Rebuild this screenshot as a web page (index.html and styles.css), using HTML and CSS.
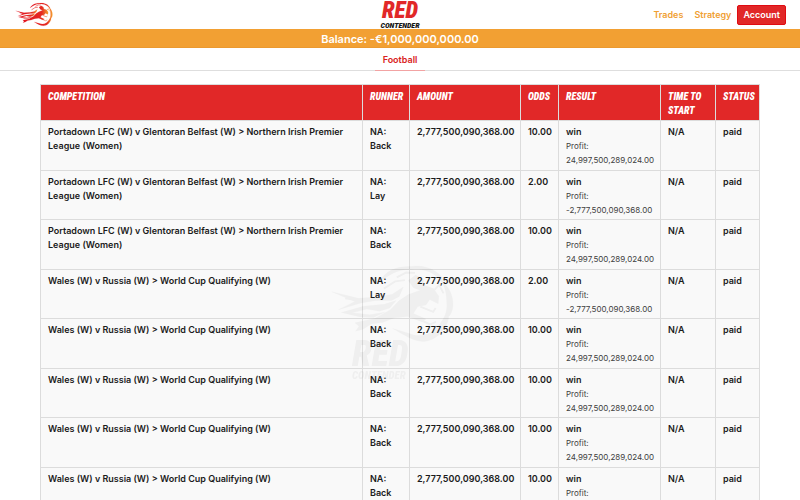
FILE: index.html
```html
<!DOCTYPE html>
<html lang="en">
<head>
<meta charset="utf-8">
<meta name="viewport" content="width=device-width, initial-scale=1">
<title>Red Contender</title>
<link rel="stylesheet" href="styles.css">
</head>
<body>
<svg class="defs" aria-hidden="true">
  <symbol id="horse" viewBox="0 20 420 260">
    <path class="ring" d="M168 82C190 42 225 30 268 31C320 22 370 48 382 90C412 125 408 175 390 190C390 230 345 271 308 269C278 269 248 248 212 228L262 243C315 265 350 235 368 205C391 175 384 145 382 118C376 65 325 34 275 40C225 38 200 58 168 82Z"/>
    <path d="M92 210L155 196L205 168L232 140L262 120L300 106L278 98L262 75L285 58L308 70L315 91L342 101L359 125L357 149L330 136L318 153L292 158L278 180L318 198L307 207L260 190L218 194L180 209L145 213L118 230L94 237L105 221Z"/>
    <path d="M18 111L103 132L160 128L211 119L246 96L233 126L209 139L158 139L111 147L40 168L92 142Z"/>
    <path d="M49 177L119 157L185 151L223 139L203 163L170 173L130 166L83 178L139 184L187 176L151 193L109 191Z"/>
    <path class="stroke" d="M184 101L220 78L251 74M225 65L255 50L283 51M272 188L331 215L350 207M345 105L360 89L374 116M300 158L341 175L349 163M61 132L108 139L165 135"/>
  </symbol>
  <linearGradient id="flame"><stop offset="0" stop-color="#e1111e"/><stop offset=".75" stop-color="#e52b22"/><stop offset="1" stop-color="#f5a02e"/></linearGradient>
</svg>
<header class="topbar">
  <a class="home" href="#" aria-label="Home"><svg class="horse"><use href="#horse"/></svg></a>
  <a class="brand" href="#"><span class="brand-red">RED</span><span class="brand-name">CONTENDER</span></a>
  <nav class="nav">
    <a href="#">Trades</a>
    <a href="#">Strategy</a>
    <button type="button">Account</button>
  </nav>
</header>
<div class="balance">Balance: -€1,000,000,000.00</div>
<nav class="tabs"><a href="#">Football</a></nav>
<main>
  <table>
    <colgroup><col><col class="c-runner"><col class="c-amount"><col class="c-odds"><col class="c-result"><col class="c-time"><col class="c-status"></colgroup>
    <thead><tr><th>Competition</th><th>Runner</th><th>Amount</th><th>Odds</th><th>Result</th><th>Time to Start</th><th>Status</th></tr></thead>
    <tbody>
      <tr><td>Portadown LFC (W) v Glentoran Belfast (W) &gt; Northern Irish Premier League (Women)</td><td>NA:<br>Back</td><td>2,777,500,090,368.00</td><td>10.00</td><td>win<small>Profit: 24,997,500,289,024.00</small></td><td>N/A</td><td>paid</td></tr>
      <tr><td>Portadown LFC (W) v Glentoran Belfast (W) &gt; Northern Irish Premier League (Women)</td><td>NA:<br>Lay</td><td>2,777,500,090,368.00</td><td>2.00</td><td>win<small>Profit:<br>-2,777,500,090,368.00</small></td><td>N/A</td><td>paid</td></tr>
      <tr><td>Portadown LFC (W) v Glentoran Belfast (W) &gt; Northern Irish Premier League (Women)</td><td>NA:<br>Back</td><td>2,777,500,090,368.00</td><td>10.00</td><td>win<small>Profit: 24,997,500,289,024.00</small></td><td>N/A</td><td>paid</td></tr>
      <tr><td>Wales (W) v Russia (W) &gt; World Cup Qualifying (W)</td><td>NA:<br>Lay</td><td>2,777,500,090,368.00</td><td>2.00</td><td>win<small>Profit:<br>-2,777,500,090,368.00</small></td><td>N/A</td><td>paid</td></tr>
      <tr><td>Wales (W) v Russia (W) &gt; World Cup Qualifying (W)</td><td>NA:<br>Back</td><td>2,777,500,090,368.00</td><td>10.00</td><td>win<small>Profit: 24,997,500,289,024.00</small></td><td>N/A</td><td>paid</td></tr>
      <tr><td>Wales (W) v Russia (W) &gt; World Cup Qualifying (W)</td><td>NA:<br>Back</td><td>2,777,500,090,368.00</td><td>10.00</td><td>win<small>Profit: 24,997,500,289,024.00</small></td><td>N/A</td><td>paid</td></tr>
      <tr><td>Wales (W) v Russia (W) &gt; World Cup Qualifying (W)</td><td>NA:<br>Back</td><td>2,777,500,090,368.00</td><td>10.00</td><td>win<small>Profit: 24,997,500,289,024.00</small></td><td>N/A</td><td>paid</td></tr>
      <tr><td>Wales (W) v Russia (W) &gt; World Cup Qualifying (W)</td><td>NA:<br>Back</td><td>2,777,500,090,368.00</td><td>10.00</td><td>win<small>Profit: 24,997,500,289,024.00</small></td><td>N/A</td><td>paid</td></tr>
    </tbody>
  </table>
</main>
<div class="watermark" aria-hidden="true">
  <svg class="horse"><use href="#horse"/></svg>
  <div class="brand"><span class="brand-red">RED</span><span class="brand-name">CONTENDER</span></div>
</div>
</body>
</html>
```
FILE: styles.css
```css
* { box-sizing: border-box; }
body {
  margin: 0;
  background: #fff;
  color: #1b1b1b;
  font: 600 9px/14px Inter, "Liberation Sans", sans-serif;
}
html { scrollbar-width: none; }
a { text-decoration: none; }
.defs { position: absolute; width: 0; height: 0; }
.topbar {
  display: grid;
  grid-template-columns: 1fr auto 1fr;
  align-items: center;
  height: 29px;
  padding: 0 14px;
}
.home { display: flex; }
.home .horse { width: 40px; height: 25px; fill: url(#flame); stroke: url(#flame); }
.horse .ring { stroke: none; }
.stroke { fill: none; stroke-width: 6; }
.brand {
  display: flex;
  flex-direction: column;
  align-items: center;
  font-family: "Roboto Condensed", "Liberation Sans Narrow", Roboto, sans-serif;
  font-style: italic;
  font-weight: 900;
}
.brand-red { color: #e12828; font-size: 23px; line-height: 22px; }
.brand-name { color: #171717; font-size: 8px; line-height: 7px; }
.nav {
  display: flex;
  justify-content: flex-end;
  align-items: center;
  gap: 11px;
}
.nav a { color: #f0a033; }
.nav button {
  height: 20px;
  margin-left: -5px;
  padding: 0 5px;
  border: 1px solid #e00b12;
  border-radius: 2px;
  background: #e12828;
  color: #fff;
  font: inherit;
}
.balance {
  height: 19px;
  background: #f2a033;
  border-bottom: 1px solid #eb9930;
  color: #fff;
  font-size: 11px;
  line-height: 20px;
  text-align: center;
}
.tabs {
  display: flex;
  justify-content: center;
  height: 23px;
  border-bottom: 1px solid #dedede;
}
.tabs a {
  height: 23px;
  padding: 0 8px;
  border-bottom: 1px solid #f2a3a3;
  color: #d92121;
  line-height: 23px;
}
main { width: 90%; margin: 13px auto 0; }
table { width: 100%; table-layout: fixed; border-collapse: collapse; }
.c-runner { width: 47px; }
.c-amount { width: 111px; }
.c-odds { width: 38px; }
.c-result { width: 102px; }
.c-time { width: 55px; }
.c-status { width: 44px; }
th, td {
  padding: 4px 5px 2px 7px;
  border: 1px solid #dcdcdc;
  text-align: left;
  vertical-align: top;
}
th {
  height: 36px;
  padding-top: 5px;
  background: #e12828;
  color: #fff;
  font: italic 900 10px/14px "Roboto Condensed", "Liberation Sans Narrow", Roboto, sans-serif;
  text-transform: uppercase;
}
td { height: 49px; background: #f9f9f9; }
tr:nth-child(odd) td { height: 50px; }
small { display: block; color: #404040; font-size: 8px; font-weight: 400; line-height: 14px; }
.watermark {
  position: fixed;
  left: 50%;
  top: 262px;
  width: 140px;
  margin-left: -74px;
  opacity: .04;
  pointer-events: none;
}
.watermark .horse { display: block; width: 132px; height: 84px; fill: #000; stroke: #000; }
.watermark .brand { align-items: flex-start; padding-left: 26px; margin-top: -8px; }
.watermark .brand-red { color: #000; font-size: 36px; line-height: 32px; }
.watermark .brand-name { color: #000; font-size: 11px; line-height: 12px; }
```
